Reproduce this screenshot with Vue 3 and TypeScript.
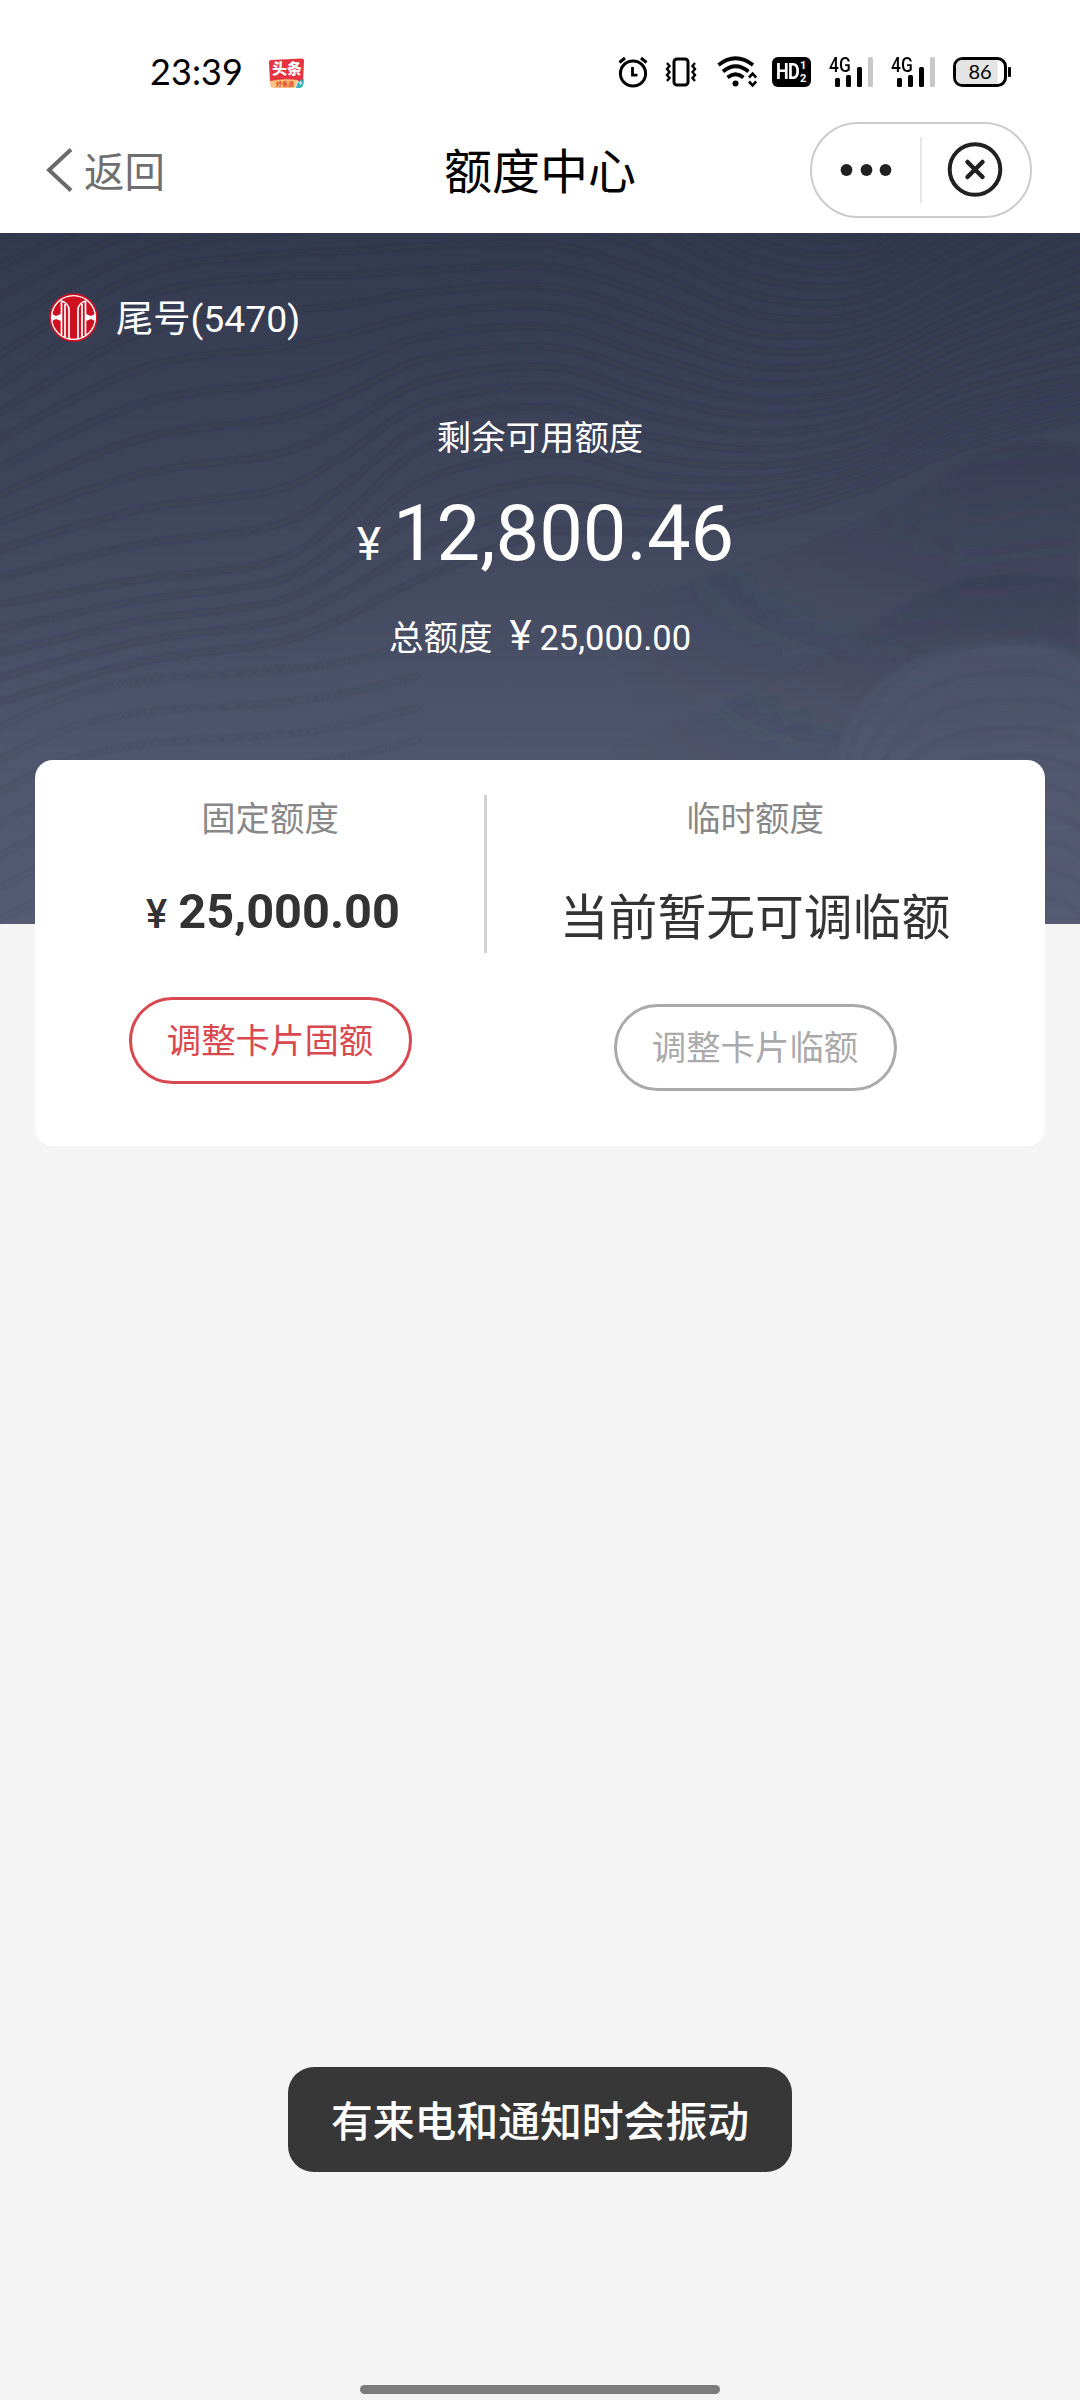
<script setup lang="ts">
interface QuotaColumn {
  key: string
  label: string
  amount?: string
  notice?: string
  action: string
  disabled: boolean
}

const columns: QuotaColumn[] = [
  { key: 'fixed', label: '固定额度', amount: '25,000.00', action: '调整卡片固额', disabled: false },
  { key: 'temp', label: '临时额度', notice: '当前暂无可调临额', action: '调整卡片临额', disabled: true },
]

type Point = [number, number]

const xs = [-20, 138, 275, 344, 427, 551, 654, 757, 861, 964, 1100]
const ridges = [
  [-20, -70, -90, -100, -105, -100, -70, -10, 5, -60, -160],
  [165, 66, 44, 42, 37, 34, 64, 100, 96, 50, -10],
  [375, 347, 328, 283, 214, 194, 224, 233, 215, 171, 140],
  [500, 450, 430, 410, 375, 325, 318, 300, 268, 225, 190],
]
const counts = [6, 8, 5]

// Catmull-Rom spline through the points, written as cubic segments
function smooth(points: Point[]): string {
  let d = `M${points[0][0]} ${points[0][1].toFixed(1)}`
  for (let i = 0; i < points.length - 1; i++) {
    const p0 = points[Math.max(i - 1, 0)]
    const p1 = points[i]
    const p2 = points[i + 1]
    const p3 = points[Math.min(i + 2, points.length - 1)]
    const c = [
      p1[0] + (p2[0] - p0[0]) / 6,
      p1[1] + (p2[1] - p0[1]) / 6,
      p2[0] - (p3[0] - p1[0]) / 6,
      p2[1] - (p3[1] - p1[1]) / 6,
      p2[0],
      p2[1],
    ].map((n) => n.toFixed(1))
    d += `C${c.join(' ')}`
  }
  return d
}

const contours: string[] = []
counts.forEach((count, band) => {
  for (let i = 0; i < count; i++) {
    const t = i / count
    contours.push(
      smooth(xs.map((x, k): Point => [x, ridges[band][k] * (1 - t) + ridges[band + 1][k] * t])),
    )
  }
})

const lowerLeft = Array.from({ length: 7 }, (_, i) => {
  const y = 500 + i * 32
  return `M-10 ${y}C40 ${y - 30} 90 ${y - 50} 180 ${y - 56}S320 ${y - 60} 420 ${y - 90}`
})
const lowerRight = Array.from({ length: 10 }, (_, i) => {
  const o = i * 28
  return `M${846 + i * 10} ${540 + o}C${850 + i * 8} ${480 + o} 900 ${420 + o} 985 ${412 + o}S1070 ${424 + o} 1090 ${434 + o}`
})
</script>

<template>
  <div class="screen">
    <header class="top">
      <div class="status">
        <span class="clock">23:39</span>
        <span class="news">
          <svg class="news-bg" width="38" height="32" viewBox="0 0 38 32">
            <path d="M1 4Q1 2 3 2L34 0.500Q36 0.500 36 2.500L35 24Q20 20 2 24Z" fill="#e5333f" />
            <path d="M2 23Q16 20 30 22L27 30L6 30Q3 30 2.500 28Z" fill="#f9c386" />
            <path d="M28 30Q29 22 36 21L35.500 26Q35 29 32 30Z" fill="#32b4b8" />
            <path d="M31 25h3M32.500 23.500v3" stroke="#fff" stroke-width="1" />
          </svg>
          <span class="news-title">头条</span>
          <span class="news-sub">好看通</span>
        </span>
        <span class="grow"></span>
        <svg class="alarm" width="30" height="32" viewBox="0 0 30 32" fill="none" stroke="#000">
          <circle cx="15" cy="17.500" r="12.600" stroke-width="3" />
          <path d="M14.500 11v8.200h5" stroke-width="2.800" />
          <path d="M1.500 6.500L7 2M28.500 6.500L23 2" stroke-width="3" />
        </svg>
        <svg class="vibrate" width="32" height="30" viewBox="0 0 32 30" fill="none" stroke="#000" stroke-width="3">
          <rect x="9" y="2" width="14" height="26" rx="3" />
          <path d="M2 6l2.500 3L2 12l2.500 3L2 18l2.500 3L2 24M30 6l-2.500 3 2.500 3-2.500 3 2.500 3-2.500 3 2.500 3" stroke-width="2.400" />
        </svg>
        <svg class="wifi" width="40" height="32" viewBox="0 0 40 32" fill="none" stroke="#000" stroke-width="3.700">
          <path d="M1.500 9Q18.500 -4.500 36 9" />
          <path d="M6 15.500Q18.500 5 31.500 15.500" />
          <path d="M10.500 21.500Q18.500 15 26.500 21.500" />
          <circle cx="18.500" cy="27.500" r="3" fill="#000" stroke="none" />
          <path d="M32 21.500l3.600-3.800 3.600 3.800M32 25.500l3.600 3.800 3.600-3.800" stroke-width="2.600" />
        </svg>
        <span class="hd">
          <span class="hd-text">HD</span>
          <span class="hd-nums"><span>1</span><span>2</span></span>
        </span>
        <span v-for="n in 2" :key="n" class="signal">
          <svg width="46" height="30" viewBox="0 0 46 30">
            <rect x="6" y="21" width="5" height="9" rx="1.500" />
            <rect x="17" y="18" width="5" height="12" rx="1.500" />
            <rect x="28" y="10" width="5" height="20" rx="1.500" />
            <rect x="39" y="0" width="5" height="30" rx="1.500" fill="#c8c8c8" />
          </svg>
          <span class="net">4G</span>
        </span>
        <span class="battery">
          <svg width="59" height="30" viewBox="0 0 59 30">
            <rect x="1.500" y="1.500" width="51" height="27" rx="8" fill="#fff" stroke="#000" stroke-width="3" />
            <path d="M10 3H44.500V27H10Q3 27 3 20V10Q3 3 10 3Z" fill="#e4e4e4" />
            <rect x="55" y="10" width="3" height="10" rx="1" />
          </svg>
          <span class="level">86</span>
        </span>
      </div>
      <nav class="nav">
        <div class="back">
          <svg width="27" height="44" viewBox="0 0 27 44" fill="none" stroke="#6a6a6a" stroke-width="4">
            <path d="M25 1.500L3 22L25 42.500" />
          </svg>
          <span class="back-text">返回</span>
        </div>
        <h1 class="title">额度中心</h1>
        <div class="capsule">
          <svg class="dots" width="52" height="12" viewBox="0 0 52 12" fill="#212121">
            <circle cx="6.500" cy="6" r="5.900" /><circle cx="26.500" cy="6" r="5.900" /><circle cx="45.500" cy="6" r="5.900" />
          </svg>
          <span class="split"></span>
          <svg class="close" width="56" height="56" viewBox="0 0 56 56" fill="none" stroke="#212121">
            <circle cx="28" cy="27.500" r="25.300" stroke-width="4" />
            <path d="M20.500 20l15 15M35.500 20l-15 15" stroke-width="4.500" stroke-linecap="round" />
          </svg>
        </div>
      </nav>
    </header>

    <main class="body">
      <svg class="waves" width="1080" height="691" viewBox="0 0 1080 691">
        <defs>
          <linearGradient id="base" x1="0" y1="0" x2="0" y2="1">
            <stop offset="0" stop-color="#333a4f" />
            <stop offset="0.250" stop-color="#3b4157" />
            <stop offset="0.500" stop-color="#444a60" />
            <stop offset="0.750" stop-color="#4f556c" />
            <stop offset="1" stop-color="#555b73" />
          </linearGradient>
          <linearGradient id="shade" x1="0" y1="0" x2="0.250" y2="1">
            <stop offset="0" stop-color="#2d344c" stop-opacity="0.380" />
            <stop offset="1" stop-color="#2d344c" stop-opacity="0" />
          </linearGradient>
          <linearGradient id="fade">
            <stop offset="0.550" stop-color="#000" />
            <stop offset="0.900" stop-color="#fff" />
          </linearGradient>
          <mask id="right-side" maskUnits="userSpaceOnUse" x="0" y="0" width="1080" height="691">
            <rect width="1080" height="691" fill="url(#fade)" />
          </mask>
          <linearGradient id="mound" x1="0" y1="0" x2="0" y2="1">
            <stop offset="0" stop-color="#5d647e" stop-opacity="0.300" />
            <stop offset="1" stop-color="#5d647e" stop-opacity="0" />
          </linearGradient>
          <filter id="soft" x="-5%" y="-5%" width="110%" height="110%"><feGaussianBlur stdDeviation="2" /></filter>
        </defs>
        <rect width="1080" height="691" fill="url(#base)" />
        <g filter="url(#soft)">
          <g mask="url(#right-side)">
            <path d="M500 400C740 340 860 300 930 250S1040 205 1090 218V420C960 360 860 440 500 520Z" fill="url(#shade)" />
            <path d="M500 540C740 480 810 430 880 385S1000 330 1090 350V600H500Z" fill="url(#shade)" />
          </g>
          <path d="M838 540C840 470 900 415 985 410S1070 420 1090 430V700H850Z" fill="url(#mound)" />
          <g fill="none" stroke="#20263a" stroke-width="4.500" stroke-opacity="0.200">
            <path v-for="(d, i) in contours" :key="'c' + i" :d="d" />
          </g>
          <g fill="none" stroke="#2c334b" stroke-width="4" stroke-opacity="0.120">
            <path v-for="(d, i) in lowerLeft" :key="'l' + i" :d="d" />
            <path v-for="(d, i) in lowerRight" :key="'r' + i" :d="d" />
          </g>
        </g>
      </svg>

      <section class="summary">
        <div class="account">
          <svg width="50" height="50" viewBox="0 0 50 50">
            <circle cx="25.500" cy="24.500" r="24.300" fill="#cf1020" />
            <circle cx="25.500" cy="24.500" r="21.900" fill="none" stroke="#fff" stroke-width="1.400" />
            <g fill="none" stroke="#fff" stroke-width="1.700">
              <path d="M13.500 7.500V42M13.500 8C17 9 21 12 21 17V46M17 11V44.500" />
              <path d="M37.500 7.500V42M37.500 8C34 9 30 12 30 17V46M34 11V44.500" />
            </g>
            <path d="M4 21L8 23L13 21V28L8 26L4 28ZM47 21L43 23L38 21V28L43 26L47 28Z" fill="#fff" />
          </svg>
          <span class="account-text">尾号(5470)</span>
        </div>
        <p class="label">剩余可用额度</p>
        <p class="available"><span class="yen">¥</span><span>12,800.46</span></p>
        <p class="total"><span>总额度</span><span class="yen">¥</span><span>25,000.00</span></p>
      </section>

      <section class="card">
        <div v-for="c in columns" :key="c.key" class="col" :class="c.key">
          <p class="col-label">{{ c.label }}</p>
          <p v-if="c.amount" class="amount"><span class="yen">¥</span><span>{{ c.amount }}</span></p>
          <p v-else class="notice">{{ c.notice }}</p>
          <button class="action" type="button" :disabled="c.disabled">{{ c.action }}</button>
        </div>
      </section>
    </main>

    <footer class="bottom">
      <div class="toast">有来电和通知时会振动</div>
      <div class="home"></div>
    </footer>
  </div>
</template>

<style>
body {
  margin: 0;
  background: #f4f4f4;
}
</style>

<style scoped>
.screen {
  display: flex;
  flex-direction: column;
  width: 1080px;
  height: 2400px;
  overflow: hidden;
  background: #f4f4f4;
  font-family: Roboto, "Noto Sans CJK SC", sans-serif;
}
p,
h1 {
  margin: 0;
  font-weight: 400;
}
svg {
  display: block;
  flex: none;
}
.top {
  height: 233px;
  background: #fff;
}
.status {
  display: flex;
  align-items: center;
  box-sizing: border-box;
  height: 110px;
  padding: 34px 68px 0 150px;
}
.clock {
  width: 118px;
  padding-bottom: 2px;
  font: 36px/38px Lato, sans-serif;
  letter-spacing: 0.1px;
}
.news {
  position: relative;
  width: 38px;
  height: 32px;
  margin-top: 4px;
}
.news-title {
  position: absolute;
  top: 2px;
  left: 4px;
  width: 30px;
  color: #fff;
  font-size: 15px;
  font-weight: 900;
  line-height: 18px;
  white-space: nowrap;
}
.news-sub {
  position: absolute;
  top: 22px;
  left: 8px;
  color: #dd4b25;
  font-size: 6px;
  font-weight: 700;
  line-height: 8px;
  white-space: nowrap;
}
.grow {
  flex: 1;
}
.alarm {
  margin-right: 17px;
}
.vibrate {
  margin-right: 20px;
}
.wifi {
  margin-right: 15px;
}
.hd {
  display: flex;
  align-items: center;
  justify-content: center;
  gap: 1px;
  width: 39px;
  height: 30px;
  margin-right: 18px;
  border-radius: 6px;
  background: #000;
  color: #fff;
  font: 700 18px/22px Roboto, sans-serif;
}
.hd-text {
  letter-spacing: -0.8px;
  transform: scaleY(1.22);
}
.hd-nums {
  display: flex;
  flex-direction: column;
  width: 7px;
  font-size: 11px;
  line-height: 13px;
}
.signal {
  position: relative;
  width: 46px;
  margin-right: 16px;
}
.net {
  position: absolute;
  top: -2px;
  left: 0;
  font: 500 20px/20px Roboto, sans-serif;
  transform: scaleX(0.87);
  transform-origin: left;
}
.battery {
  position: relative;
  width: 59px;
}
.level {
  position: absolute;
  top: 3px;
  left: 0;
  width: 54px;
  font: 20px/22px Lato, sans-serif;
  text-align: center;
}
.nav {
  display: flex;
  align-items: center;
  justify-content: space-between;
  height: 120px;
  padding: 0 48px 0 46px;
}
.back {
  display: flex;
  align-items: center;
  gap: 11px;
  width: 224px;
  color: #6f6f6f;
  font-size: 40.5px;
  line-height: 44px;
}
.back-text {
  padding-top: 6px;
}
.title {
  padding-top: 5px;
  color: #000;
  font-size: 48px;
  line-height: 60px;
}
.capsule {
  display: flex;
  align-items: center;
  box-sizing: border-box;
  width: 222px;
  height: 96px;
  padding-left: 28px;
  border: 2px solid #ccc;
  border-radius: 48px;
}
.split {
  width: 2px;
  height: 66px;
  margin: 0 25px 0 28px;
  background: #e8e8e8;
}
.body {
  position: relative;
  padding: 60px 35px 0;
}
.waves {
  position: absolute;
  top: 0;
  left: 0;
}
.summary {
  position: relative;
  height: 467px;
  color: #fff;
}
.account {
  display: flex;
  align-items: center;
  gap: 18px;
  height: 50px;
  padding-left: 13px;
  font-size: 37.3px;
  line-height: 50px;
}
.account-text {
  padding-top: 1px;
}
.label {
  height: 50px;
  margin-top: 70px;
  font-size: 34.4px;
  line-height: 50px;
  text-align: center;
}
.available {
  display: flex;
  align-items: baseline;
  justify-content: center;
  gap: 12px;
  height: 90px;
  margin-top: 26px;
  padding-left: 11px;
  font-size: 77.7px;
  line-height: 90px;
}
.available .yen {
  font-size: 46px;
}
.total {
  display: flex;
  align-items: baseline;
  justify-content: center;
  height: 50px;
  margin-top: 32px;
  font-size: 34.5px;
  line-height: 50px;
}
.total .yen {
  margin: 0 8px 0 17px;
  font-size: 42px;
}
.card {
  position: relative;
  display: flex;
  box-sizing: border-box;
  height: 386px;
  padding: 35px 19px 0;
  border-radius: 18px;
  background: #fff;
}
.col {
  display: flex;
  flex-direction: column;
  align-items: center;
  width: 538px;
}
.fixed {
  position: relative;
  width: 432px;
}
.fixed::after {
  position: absolute;
  top: 0;
  right: -1px;
  width: 3px;
  height: 158px;
  background: #d2d2d2;
  content: "";
}
.col-label {
  height: 48px;
  color: #888;
  font-size: 34.4px;
  line-height: 48px;
}
.amount {
  display: flex;
  align-items: baseline;
  gap: 11px;
  height: 60px;
  margin: 39px 0 55px;
  padding-left: 6px;
  color: #333;
  font-size: 48.7px;
  font-weight: 700;
  line-height: 60px;
}
.amount .yen {
  font-size: 40px;
  font-weight: 500;
}
.notice {
  height: 60px;
  margin: 46px 0 55px;
  color: #333;
  font-size: 48.8px;
  line-height: 60px;
}
.action {
  box-sizing: border-box;
  width: 283px;
  height: 87px;
  padding: 0;
  border: 3px solid #d9484f;
  border-radius: 44px;
  background: #fff;
  color: #d9484f;
  font-family: inherit;
  font-size: 34.4px;
  line-height: 80px;
}
.action:disabled {
  border-color: #aaa;
  color: #aaa;
}
.bottom {
  display: flex;
  flex: 1;
  flex-direction: column;
  align-items: center;
  justify-content: flex-end;
}
.toast {
  width: 504px;
  height: 105px;
  margin-bottom: 213px;
  border-radius: 26px;
  background: #373737;
  color: #fff;
  font-size: 41.8px;
  font-weight: 500;
  line-height: 111px;
  text-align: center;
}
.home {
  width: 360px;
  height: 9px;
  margin-bottom: 6px;
  border-radius: 5px;
  background: #7c7c7c;
}
</style>
